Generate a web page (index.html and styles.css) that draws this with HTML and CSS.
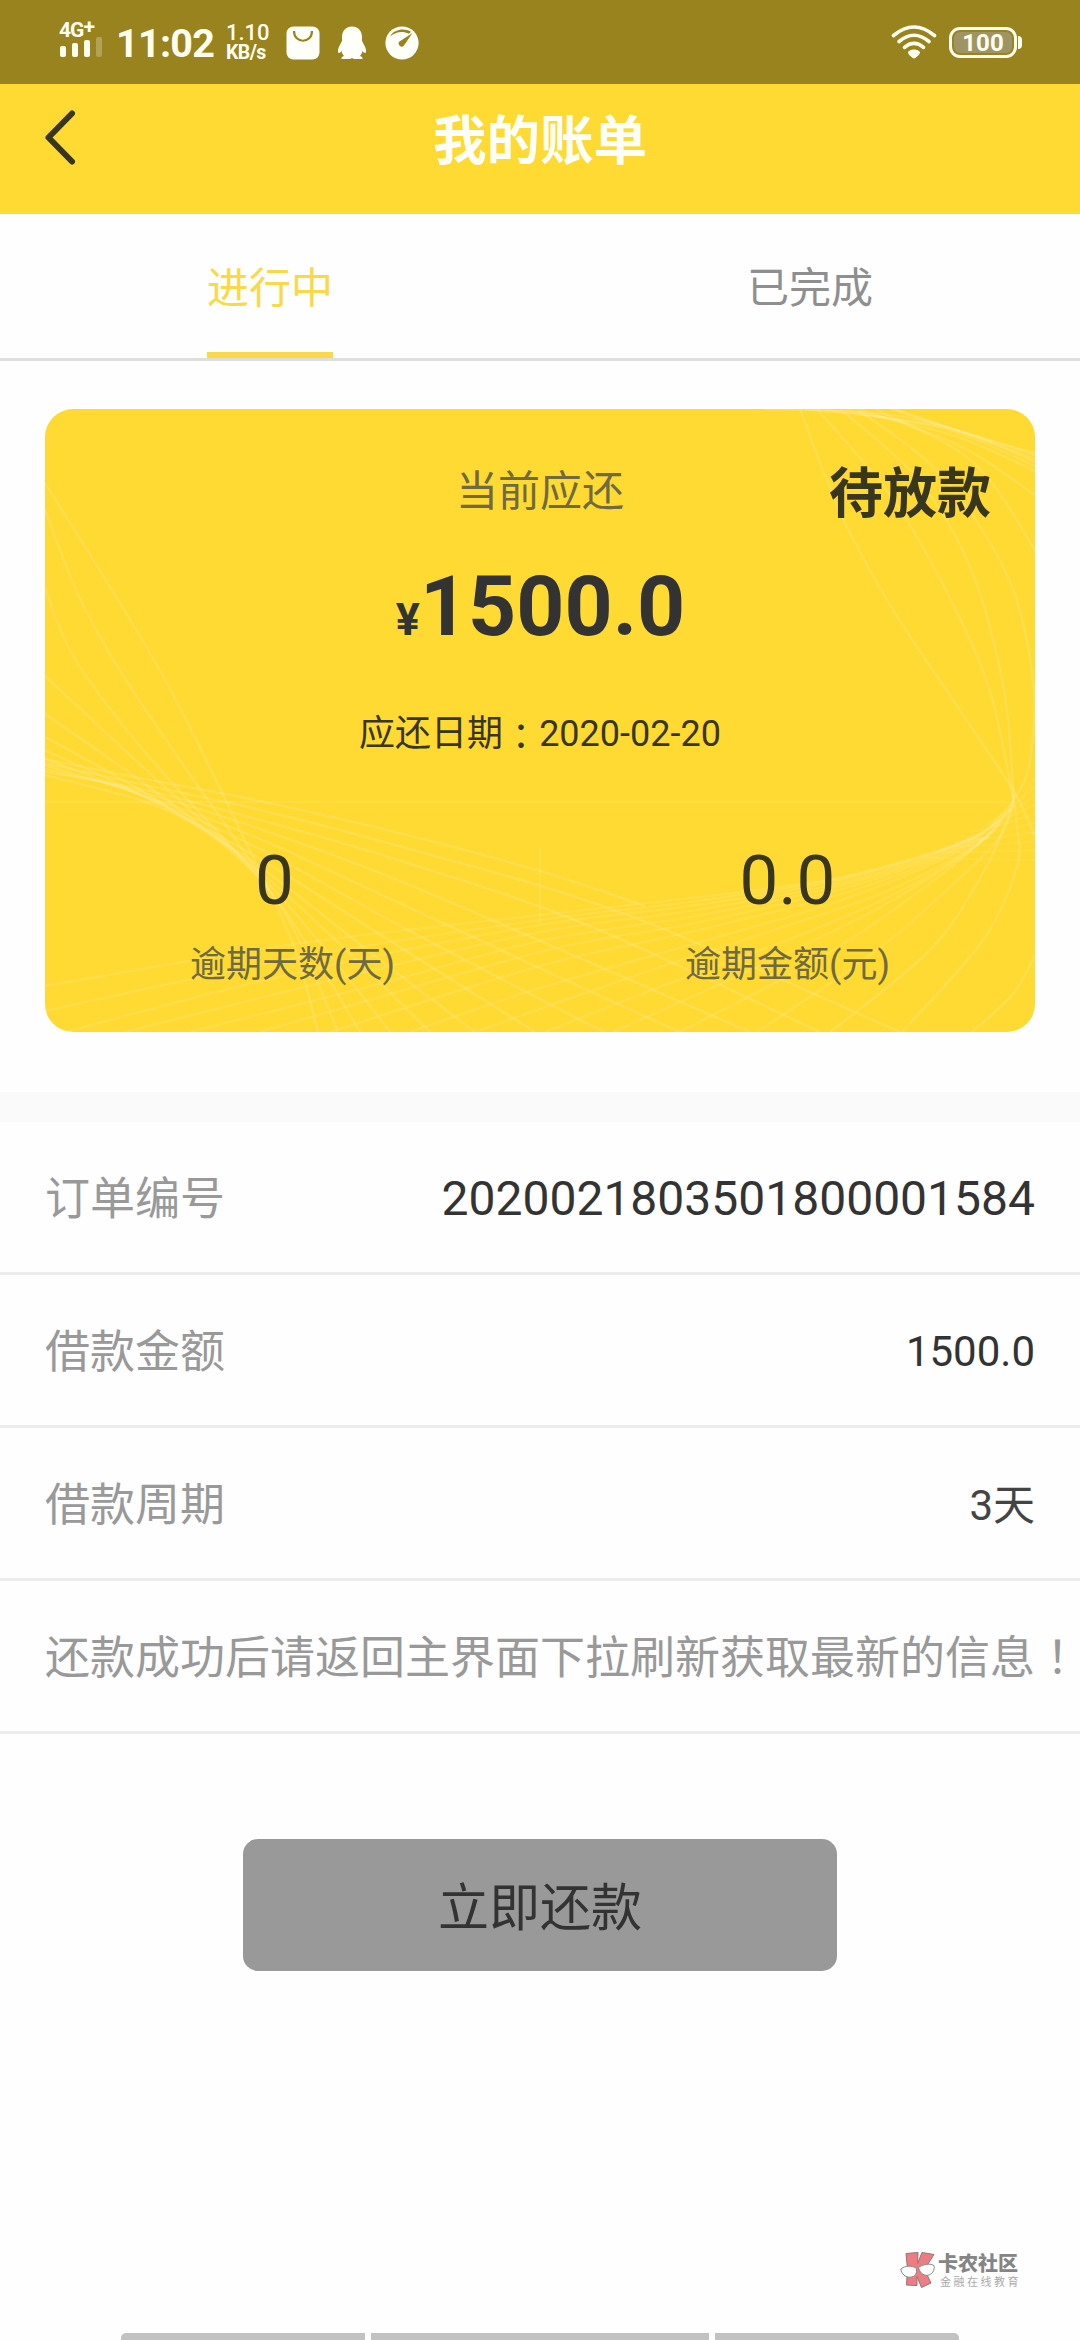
FILE: index.html
```html
<!DOCTYPE html>
<html lang="zh-CN">
<head>
<meta charset="utf-8">
<title>我的账单</title>
<link rel="stylesheet" href="styles.css">
</head>
<body>
<div class="screen">
  <div class="status">
    <div class="signal">
      <span class="net">4G<sup>+</sup></span>
      <svg width="44" height="22" viewBox="0 0 44 22" fill="#fffff0"><rect x="1" y="10" width="6" height="11" rx="2"/><rect x="13" y="7" width="6" height="14" rx="2"/><rect x="25" y="4" width="6" height="17" rx="2"/><rect x="37" y="1" width="6" height="20" rx="2" opacity=".25"/></svg>
    </div>
    <div class="clock">11:02</div>
    <div class="speed"><span>1.10</span><span class="unit">KB/s</span></div>
    <svg class="bag" width="34" height="34" viewBox="0 0 34 34"><rect x=".5" y=".5" width="33" height="33" rx="7" fill="#fffffa"/><path d="M8 5C8 18 26 18 26 5" fill="none" stroke="#98831f" stroke-width="2.200"/></svg>
    <svg class="penguin" width="30" height="34" viewBox="0 0 30 34"><path fill="#fffffa" d="M15 .5c6 0 10 4.500 10 10.500v4c1.500 3 3.500 6 4 9 .3 2-.3 3-1 3-.8 0-1.700-1-2.500-2-.4 2-1.200 3.500-2.500 5 1.800.5 2.700 1.300 2.500 3h-8.500l-2-1-2 1H4.500c-.2-1.700.7-2.500 2.500-3C5.700 28.500 4.900 27 4.500 25c-.8 1-1.700 2-2.500 2-.7 0-1.300-1-1-3 .5-3 2.500-6 4-9v-4C5 5 9 .5 15 .5z"/></svg>
    <svg class="gauge" width="34" height="34" viewBox="0 0 34 34"><circle cx="17" cy="17" r="16.600" fill="#fffffa"/><path d="M5 10.500C9.500 2.500 20 2 26 5.800l-2 2C17.500 4.500 11 5.500 5 10.500z" fill="#98831f"/><path d="M27.500 7L14.500 15.500a3 3 0 1 0 4.500 4z" fill="#98831f"/></svg>
    <svg class="wifi" width="46" height="34" viewBox="0 0 46 34" fill="none" stroke="#fffff0" stroke-width="3.600" stroke-linecap="round"><path d="M2.500 10.500Q23-6.500 43.500 10.500"/><path d="M8 16.500Q23 4 38 16.500"/><path d="M13.500 22.300Q23 14.500 32.500 22.300"/><path d="M23 24.500c3 0 6 1.500 6 3 0 2-4.500 5.500-6 6-1.500-.5-6-4-6-6 0-1.500 3-3 6-3z" fill="#fffff0" stroke="none"/></svg>
    <div class="battery">100</div>
  </div>

  <div class="header">
    <svg class="back" width="36" height="60" viewBox="0 0 36 60"><path d="M30 6.500L6.500 30.500 30 54.500" fill="none" stroke="#38361f" stroke-width="6" stroke-linecap="round" stroke-linejoin="round"/></svg>
    <h1>我的账单</h1>
  </div>

  <div class="tabs">
    <div class="tab active"><span>进行中</span></div>
    <div class="tab"><span>已完成</span></div>
  </div>

  <div class="card">
    <svg class="waves" id="waves" width="990" height="623" viewBox="0 0 990 623"></svg>
    <div class="state">待放款</div>
    <div class="caption">当前应还</div>
    <div class="amount"><small>¥</small>1500.0</div>
    <div class="due">应还日期<span class="tc colon" lang="zh-TW">：</span>2020-02-20</div>
    <div class="stats">
      <div class="stat"><div class="value shifted">0</div><div class="name">逾期天数(天)</div></div>
      <div class="stat"><div class="value">0.0</div><div class="name">逾期金额(元)</div></div>
    </div>
  </div>

  <div class="band"></div>

  <div class="row"><span>订单编号</span><span class="number long">2020021803501800001584</span></div>
  <div class="row"><span>借款金额</span><span class="number">1500.0</span></div>
  <div class="row"><span>借款周期</span><span class="number term">3天</span></div>
  <div class="row"><span>还款成功后请返回主界面下拉刷新获取最新的信息<span class="tc" lang="zh-TW">！</span></span></div>

  <div class="pay">立即还款</div>

  <div class="brand">
    <svg width="36" height="38" viewBox="0 0 36 38"><g fill="#ee7d83" stroke="#8d7775" stroke-width="1"><path d="M6 2.500L18 1.500l-.5 11L22 1.500l12 2-9.500 15L31 32l-9.500 4.500-4.500-11v9L6.500 34 7.500 18z"/></g><g fill="#fff" stroke="#888" stroke-width="1"><path d="M.8 18c4-3.300 11-3.800 15.500-.8 1 5-1 8.500-6 9C5 26.500 1.500 23 .8 18z"/><path d="M18.500 16.500c5-3.500 11.500-4.300 15.500-2 1 5-2 9.300-6.500 9.800-4.500.3-8-3-9-7.800z"/></g></svg>
    <div class="brand-text"><b>卡农社区</b><span>金融在线教育</span></div>
  </div>

  <div class="nav"><i></i><i class="wide"></i><i></i></div>
</div>
<script src="waves.js"></script>
</body>
</html>
```
FILE: styles.css
```css
* { box-sizing: border-box; }
body { margin: 0; background: #fefefe; font-family: Roboto, "Noto Sans CJK SC", sans-serif; color: #333; }
svg { display: block; flex: none; }
.screen { width: 1080px; height: 2340px; overflow: hidden; display: flex; flex-direction: column; }
.screen > * { flex: none; }
.tc { font-family: "Noto Sans CJK TC", sans-serif; line-height: 0; }
.colon { vertical-align: -4px; }

.status { height: 84px; background: #98831f; color: #fffff0; display: flex; align-items: flex-start; padding-left: 59px; font-weight: 700; }
.signal { width: 44px; padding-top: 20px; }
.net { display: block; height: 16px; font-size: 21px; line-height: 20px; letter-spacing: -1px; white-space: nowrap; }
.net sup { font-size: 21px; line-height: 0; vertical-align: 3px; }
.clock { width: 109px; margin-left: 13px; font-size: 39.500px; letter-spacing: -.7px; line-height: 48px; padding-top: 20px; }
.speed { width: 44px; margin-left: 1px; padding-top: 23px; font-size: 22px; line-height: 20px; font-weight: 500; }
.speed span { display: block; }
.speed .unit { font-size: 19.500px; font-weight: 700; letter-spacing: -.6px; }
.bag { margin: 26px 0 0 16px; }
.penguin { margin: 26px 0 0 17px; }
.gauge { margin: 26px 0 0 18px; }
.wifi { margin: 25px 0 0 472px; }
.battery { position: relative; width: 68px; height: 31px; margin: 27px 0 0 12px; border: 3px solid #fffff0; border-radius: 11px; background: #9f9564; box-shadow: inset 0 0 0 2px #98831f; font-size: 24px; line-height: 26px; text-align: center; }
.battery::after { content: ""; position: absolute; left: 66px; top: 6px; width: 4px; height: 13px; border-radius: 0 4px 4px 0; background: #fffff0; }

.header { height: 130px; background: #ffda33; display: grid; grid-template-columns: 120px 1fr 120px; }
.back { margin: 23px 0 0 42px; }
.header h1 { margin: 0; padding-top: 18px; text-align: center; font-size: 53.500px; line-height: 80px; font-weight: 700; color: #fffffa; }

.tabs { height: 147px; border-bottom: 3px solid #dedede; display: flex; }
.tab { flex: 1; display: flex; justify-content: center; font-size: 42px; line-height: 149px; color: #8f8f8f; }
.tab.active span { height: 144px; border-bottom: 6px solid #fad846; color: #fad846; }

.card { position: relative; width: 990px; height: 623px; margin: 48px 45px 60px; border-radius: 28px; background: #ffda33; overflow: hidden; text-align: center; }
.waves { position: absolute; left: 0; top: 0; }
.state { position: absolute; right: 44px; top: 46px; font-size: 54px; line-height: 80px; font-weight: 700; color: #38361f; }
.caption, .amount, .due, .stats { position: relative; }
.caption { padding-top: 53px; font-size: 42px; line-height: 60px; color: #706a41; }
.amount { height: 100px; margin-top: 35px; padding-left: 1px; font-size: 84px; line-height: 100px; font-weight: 700; }
.amount small { font-size: 45px; }
.due { height: 54px; margin-top: 50px; font-size: 36px; line-height: 54px; color: #38361f; }
.stats { display: flex; margin-top: 80px; }
.stat { flex: 1; }
.value { font-size: 69px; line-height: 80px; color: #38361f; }
.value.shifted { padding-right: 36px; }
.name { margin-top: 17px; font-size: 36px; line-height: 54px; color: #706a41; }

.band { height: 30px; background: #fafafa; }
.row { height: 153px; padding: 5px 45px 0; border-bottom: 3px solid #ececec; display: flex; align-items: center; justify-content: space-between; font-size: 45px; line-height: 66px; color: #999; white-space: nowrap; }
.number { padding-bottom: 2px; font-size: 42px; color: #333; }
.number.long { font-size: 48px; }
.number.term { padding-bottom: 0; color: #444; }

.pay { width: 594px; height: 132px; margin: 105px auto 0; border-radius: 15px; background: #999; color: #333; text-align: center; font-size: 51px; line-height: 139px; }

.brand { height: 40px; margin: 280px 0 0 900px; display: flex; gap: 2px; }
.brand-text { padding-top: 3px; color: #858585; white-space: nowrap; }
.brand-text b { display: block; font-size: 20px; line-height: 21px; font-weight: 900; }
.brand-text span { display: block; padding-left: 2px; font-size: 11px; line-height: 16px; letter-spacing: 2.500px; color: #aaa; }

.nav { height: 14px; margin: 42px 121px 0; display: flex; gap: 6px; border-radius: 5px; overflow: hidden; }
.nav i { flex: 0 0 244px; background: #c2c2c2; }
.nav .wide { flex-basis: 338px; }
```
FILE: waves.js
```js
// Thin light strands woven across the bill card.
const strands = [
  // left ribbon
  [[0,74],[118,267],[215,463],[250,540],[273,623]],
  [[0,101],[40,200],[100,300],[215,466],[255,533],[293,623]],
  [[0,179],[30,250],[100,343],[215,470],[262,535],[315,623]],
  [[0,267],[100,360],[215,466],[280,540],[345,623]],
  [[0,305],[100,375],[215,463],[300,540],[385,623]],
  [[0,328],[100,384],[215,458],[330,547],[430,623]],
  [[0,341],[100,388],[215,450],[350,535],[490,623]],
  [[0,350],[100,388],[215,440],[350,514],[520,603],[560,623]],
  [[0,356],[100,387],[215,430],[350,492],[540,580],[635,623]],
  [[0,360],[100,384],[215,420],[350,470],[560,560],[705,623]],
  [[0,363],[100,381],[215,411],[350,450],[540,515],[775,623]],
  [[0,354],[100,376],[215,401],[350,436],[580,505],[855,623]],
  [[0,350],[100,370],[215,392],[350,423],[495,462],[600,497]],
  [[0,366],[85,388],[130,405],[175,433],[215,469]],
  // strands from the top edge
  [[755,0],[795,103],[845,196],[912,297],[968,381],[990,427]],
  [[772,0],[845,86],[895,170],[943,276],[968,389]],
  [[795,0],[872,69],[925,158],[958,276],[969,389]],
  [[812,0],[895,65],[962,166],[988,271],[985,351],[970,389],[945,418]],
  [[830,0],[928,53],[990,141]],
  [[815,0],[915,37],[990,86]],
  [[800,0],[910,27],[990,62]],
  [[780,0],[900,20],[990,57]],
  [[760,0],[900,18],[990,53]],
  [[845,0],[930,28],[990,50]],
  [[720,0],[860,8],[990,46]],
  [[850,0],[930,27],[990,44]],
  // outermost strands under the knot
  [[785,623],[885,541],[938,464],[962,411],[969,389]],
  [[857,623],[938,531],[972,458],[972,418],[968,385]],
  [[927,623],[968,585],[990,546]],
];

// Lower ribbon rising to the knot; these bunch up, so they are drawn fainter.
const ribbon = [
  [[0,577],[250,535],[495,506],[645,489],[782,471],[872,448],[928,428],[958,408],[968,391]],
  [[0,602],[250,549],[495,511],[645,493],[782,472],[872,449],[928,429],[955,411]],
  [[20,623],[250,564],[495,516],[645,497],[782,474],[872,450],[928,429],[952,414]],
  [[80,623],[300,568],[495,523],[645,502],[782,477],[872,452],[940,424]],
  [[145,623],[330,576],[495,532],[645,508],[782,480],[872,454],[935,428]],
  [[215,623],[495,543],[645,515],[782,484],[872,456],[938,428]],
  [[285,623],[495,557],[645,523],[782,489],[872,459],[942,427]],
  [[365,623],[495,579],[645,536],[782,496],[872,462],[945,427]],
  [[430,623],[600,563],[720,524],[840,483],[928,438],[955,415]],
  [[500,623],[620,576],[740,532],[850,485],[928,439],[958,412]],
  [[568,623],[695,566],[828,502],[920,445],[962,405]],
  [[635,623],[772,551],[862,491],[928,440],[966,400]],
  [[712,623],[828,544],[905,478],[955,428],[969,391]],
];

// Finer threads leaving the ribbon towards the right edge.
const threads = [];
for (let i = 0; i < 10; i++) {
  threads.push([[962 - i * 9, 403 + i * 5], [978 - i * 5, 387 + i * 7], [990, 368 + i * 9.2]]);
}

// Catmull-Rom spline through the points, written as cubic segments.
function spline(p) {
  let d = `M${p[0]}`;
  for (let i = 0; i < p.length - 1; i++) {
    const a = p[i - 1] || p[i], b = p[i], c = p[i + 1], e = p[i + 2] || c;
    d += `C${b[0] + (c[0] - a[0]) / 6} ${b[1] + (c[1] - a[1]) / 6} ${c[0] - (e[0] - b[0]) / 6} ${c[1] - (e[1] - b[1]) / 6} ${c[0]} ${c[1]}`;
  }
  return d;
}

const draw = (list, opacity, width) =>
  list.map(p => `<path d="${spline(p)}" fill="none" stroke="#fff" stroke-opacity="${opacity}" stroke-width="${width}"/>`).join('');

document.getElementById('waves').innerHTML =
  draw(strands, 0.14, 2.2) + draw(ribbon, 0.11, 2.2) + draw(threads, 0.09, 1.5) +
  '<path d="M0 393H965M495 440V515" fill="none" stroke="#fff" stroke-opacity=".1" stroke-width="2"/>';
```
